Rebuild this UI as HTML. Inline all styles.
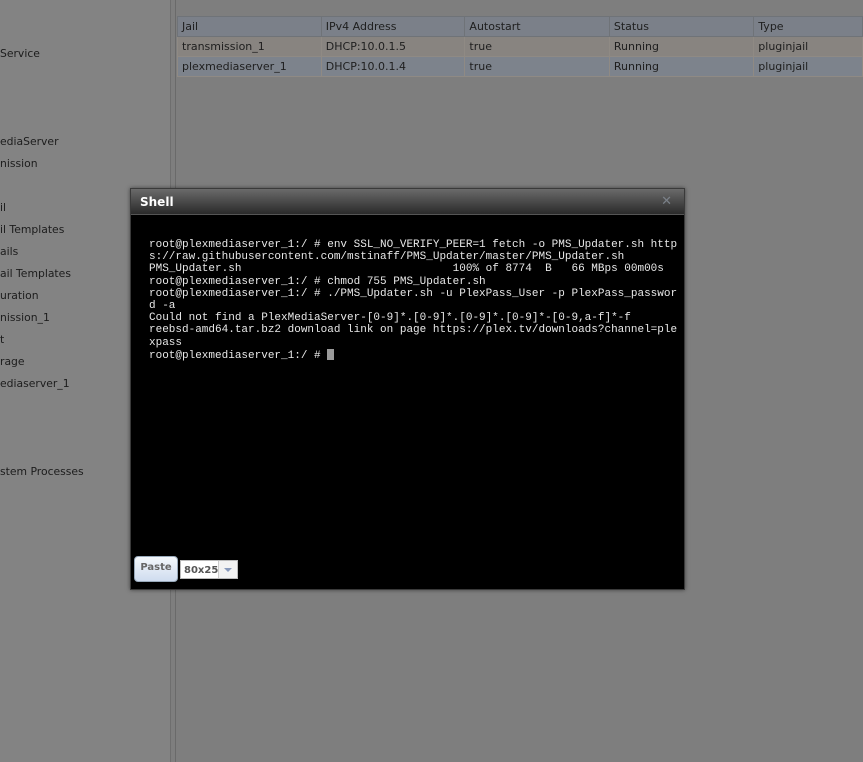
<!DOCTYPE html>
<html><head><style>
html,body{margin:0;padding:0;width:863px;height:762px;overflow:hidden;background:#7e7e7e;font-family:"DejaVu Sans","Liberation Sans",sans-serif;}
.side{position:absolute;left:0;top:0;width:170px;height:762px;background:#838383;}
.sep{position:absolute;left:170px;top:0;width:1px;height:762px;background:#6e6e6e;}
.sep2{position:absolute;left:175px;top:0;width:1px;height:762px;background:#6a6a6a;}
.sl{position:absolute;font-size:10.8px;color:#1c1c1c;white-space:nowrap;}
table{position:absolute;left:177px;top:16px;border-collapse:collapse;font-size:11px;color:#1e1e1e;}
td{height:19px;padding:0 0 0 4px;border:1px solid #8f8a84;white-space:nowrap;}
tr.h td{background:#7b8089;border-color:#6f7378;}
tr.r1 td{background:#888480;}
tr.r2 td{background:#7d838c;}
.dlg{position:absolute;left:130px;top:188px;width:553px;height:400px;background:#000;border:1px solid #3a3a3a;box-shadow:0 0 4px rgba(0,0,0,.5);}
.tb{height:25px;background:linear-gradient(#6a6a6a,#2a2a2a);border-bottom:1px solid #555;color:#fff;font-weight:bold;font-size:12px;line-height:26px;padding-left:9px;position:relative;}
.x{position:absolute;right:12px;top:0;color:#7a8088;font-size:13px;font-weight:bold;}
pre{position:absolute;left:18px;top:50px;margin:0;font-family:"Liberation Mono",monospace;font-size:11px;line-height:12.2px;color:#e8e8e8;}
.cur{display:inline-block;width:7px;height:11px;background:#9a9a9a;vertical-align:-2px;}
.paste{position:absolute;left:3px;top:367px;width:42px;height:24px;border:1px solid #9ab;border-radius:4px;background:linear-gradient(#f4f8fc,#cfdcef);font-size:10px;font-weight:bold;color:#666;text-align:center;line-height:22px;}
.sel{position:absolute;left:49px;top:371px;width:58px;height:19px;background:#fff;border:1px solid #bbb;font-size:10px;font-weight:bold;color:#555;line-height:19px;padding-left:3px;box-sizing:border-box;}
.arr{position:absolute;right:0;top:0;width:18px;height:17px;border-left:1px solid #ccc;background:#f2f2f2;}
.arr:after{content:"";position:absolute;left:5px;top:7px;border:4px solid transparent;border-top:4px solid #8899bb;border-bottom:0;}
</style></head><body>
<div class="side"></div><div class="sep"></div><div class="sep2"></div>
<div class="sl" style="left:0;top:47px">Service</div>
<div class="sl" style="left:0;top:135px">ediaServer</div>
<div class="sl" style="left:0;top:157px">nission</div>
<div class="sl" style="left:0;top:201px">il</div>
<div class="sl" style="left:0;top:223px">il Templates</div>
<div class="sl" style="left:0;top:245px">ails</div>
<div class="sl" style="left:0;top:267px">ail Templates</div>
<div class="sl" style="left:0;top:289px">uration</div>
<div class="sl" style="left:0;top:311px">nission_1</div>
<div class="sl" style="left:0;top:333px">t</div>
<div class="sl" style="left:0;top:355px">rage</div>
<div class="sl" style="left:0;top:377px">ediaserver_1</div>
<div class="sl" style="left:0;top:465px">stem Processes</div>
<table>
<tr class="h"><td style="width:139px">Jail</td><td style="width:139px">IPv4 Address</td><td style="width:140px">Autostart</td><td style="width:140px">Status</td><td style="width:104px">Type</td></tr>
<tr class="r1"><td>transmission_1</td><td>DHCP:10.0.1.5</td><td>true</td><td>Running</td><td>pluginjail</td></tr>
<tr class="r2"><td>plexmediaserver_1</td><td>DHCP:10.0.1.4</td><td>true</td><td>Running</td><td>pluginjail</td></tr>
</table>
<div class="dlg">
<div class="tb">Shell<span class="x">✕</span></div>
<pre>root@plexmediaserver_1:/ # env SSL_NO_VERIFY_PEER=1 fetch -o PMS_Updater.sh http
s://raw.githubusercontent.com/mstinaff/PMS_Updater/master/PMS_Updater.sh
PMS_Updater.sh                                100% of 8774  B   66 MBps 00m00s
root@plexmediaserver_1:/ # chmod 755 PMS_Updater.sh
root@plexmediaserver_1:/ # ./PMS_Updater.sh -u PlexPass_User -p PlexPass_passwor
d -a
Could not find a PlexMediaServer-[0-9]*.[0-9]*.[0-9]*.[0-9]*-[0-9,a-f]*-f
reebsd-amd64.tar.bz2 download link on page https://plex.tv/downloads?channel=ple
xpass
root@plexmediaserver_1:/ # <span class="cur"></span></pre>
<div class="paste">Paste</div>
<div class="sel">80x25<div class="arr"></div></div>
</div>
</body></html>
